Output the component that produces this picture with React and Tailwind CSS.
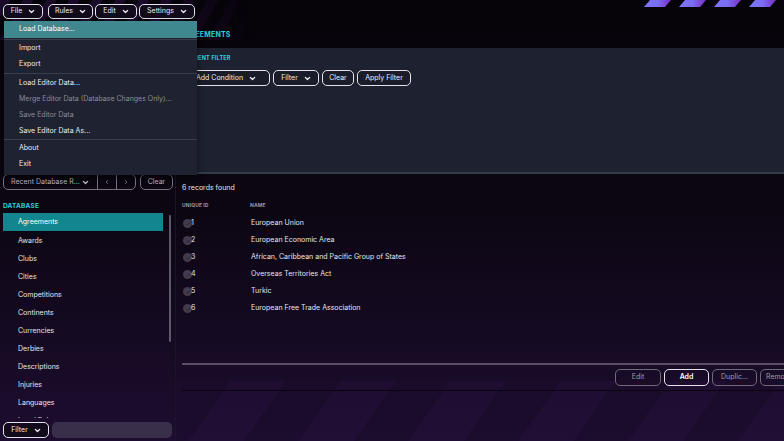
import React from "react";

const Chevron = ({ className = "" }) => (
  <svg viewBox="0 0 10 10" className={"w-[7px] h-[7px] " + className} fill="none" stroke="currentColor" strokeWidth="1.8" strokeLinecap="round" strokeLinejoin="round">
    <path d="M2 3.5 5 6.5 8 3.5" />
  </svg>
);

const Check = () => (
  <span className="w-[9px] h-[9px] rounded-full bg-[#433b4c] flex items-center justify-center">
    <svg viewBox="0 0 10 10" className="w-[6px] h-[6px]" fill="none" stroke="#2a2232" strokeWidth="1.6">
      <path d="M2 5.2 4.2 7.2 8 3" />
    </svg>
  </span>
);

function MenuButton({ label, w }) {
  return (
    <button className={`${w} h-[15px] flex items-center justify-center gap-[6px] rounded-[5px] border-[1.5px] border-[#e4e2ea] bg-[#120b1c] text-[7px] text-[#ecebf0]`}>
      {label}
      <Chevron />
    </button>
  );
}

const menuItems = [
  { t: "Load Database...", active: true },
  { sep: "h-[2px]" },
  { t: "Import" },
  { t: "Export" },
  { sep: "h-[3px]" },
  { t: "Load Editor Data..." },
  { t: "Merge Editor Data (Database Changes Only)...", dim: true },
  { t: "Save Editor Data", dim: true },
  { t: "Save Editor Data As..." },
  { sep: "h-[1px]" },
  { t: "About" },
  { t: "Exit" },
];

const tables = [
  "Agreements",
  "Awards",
  "Clubs",
  "Cities",
  "Competitions",
  "Continents",
  "Currencies",
  "Derbies",
  "Descriptions",
  "Injuries",
  "Languages",
  "Local Rules",
];

const records = [
  "European Union",
  "European Economic Area",
  "African, Caribbean and Pacific Group of States",
  "Overseas Territories Act",
  "Turkic",
  "European Free Trade Association",
];

function Outline({ children, className = "" }) {
  return (
    <button className={`h-[16px] flex items-center justify-center gap-[6px] rounded-[5px] border-[1.5px] border-[#e4e2ea] bg-[#1a1c29] text-[7px] text-[#ecebf0] ${className}`}>
      {children}
    </button>
  );
}

export default function App() {
  return (
    <div
      className="relative w-[784px] h-[441px] overflow-hidden text-[#e8e7ee] bg-[linear-gradient(180deg,#060309_0%,#0b0611_45%,#150a22_75%,#1d0d30_100%)]"
      style={{ fontFamily: "Inter, 'Noto Sans', sans-serif" }}
    >
      {/* decorative stripes */}
      <div className="absolute left-0 top-0 w-[250px] h-[40px] bg-[repeating-linear-gradient(120deg,#2a1142_0px,#2a1142_9px,#08040d_9px,#08040d_20px)] opacity-60 [mask-image:linear-gradient(90deg,#000_60%,transparent)]" />
      <div className="absolute left-[176px] bottom-0 w-[608px] h-[60px] bg-[repeating-linear-gradient(125deg,#1a0b2a_0px,#1a0b2a_45px,#27113f_45px,#27113f_90px)] opacity-40" />
      <svg className="absolute right-0 top-0" width="140" height="8" viewBox="0 0 140 8">
        <defs>
          <linearGradient id="tg" x1="0" x2="1">
            <stop offset="0" stopColor="#7b74f6" />
            <stop offset="0.5" stopColor="#7a6ef2" />
            <stop offset="1" stopColor="#7a2cc6" />
          </linearGradient>
        </defs>
        <g fill="url(#tg)">
          <polygon points="0,7 21,7 27,0 6,0" />
          <polygon points="35,7 56,7 62,0 41,0" />
          <polygon points="70,7 91,7 97,0 76,0" />
          <polygon points="105,7 126,7 132,0 111,0" />
        </g>
      </svg>

      <div className="relative flex flex-col h-full">
        {/* menubar */}
        <div className="h-[22px] flex items-start gap-[2px] pl-[3px] pt-[4px]">
          <MenuButton label="File" w="w-[40px]" />
          <span className="w-[1px]" />
          <MenuButton label="Rules" w="w-[45px]" />
          <MenuButton label="Edit" w="w-[42px]" />
          <MenuButton label="Settings" w="w-[56px]" />
        </div>

        <div className="flex flex-1 min-h-0">
          {/* left column */}
          <aside className="w-[176px] flex flex-col border-r border-[#1c1326]">
            <div className="h-[152px]" />
            <div className="flex items-center h-[16px] pl-[3px] gap-[3px]">
              <div className="flex h-[16px] rounded-[5px] border border-[#77727f] text-[#b9b6c0] text-[7px]">
                <span className="w-[94px] flex items-center justify-between pl-[7px] pr-[8px] border-r border-[#77727f]">
                  Recent Database R...
                  <Chevron />
                </span>
                <span className="w-[19px] flex items-center justify-center border-r border-[#77727f] text-[#77727f]">
                  <svg viewBox="0 0 10 10" className="w-[6px] h-[6px]" fill="none" stroke="currentColor" strokeWidth="1.5"><path d="M6.5 2 3.5 5 6.5 8" /></svg>
                </span>
                <span className="w-[18px] flex items-center justify-center text-[#77727f]">
                  <svg viewBox="0 0 10 10" className="w-[6px] h-[6px]" fill="none" stroke="currentColor" strokeWidth="1.5"><path d="M3.5 2 6.5 5 3.5 8" /></svg>
                </span>
              </div>
              <span className="ml-[1px] w-[33px] h-[16px] flex items-center justify-center rounded-[5px] border border-[#77727f] text-[#b9b6c0] text-[7px]">
                Clear
              </span>
            </div>
            <div className="mt-[12px] pl-[3px] text-[6.5px] font-bold tracking-[0.2px] text-[#2ad0dd]">DATABASE</div>
            <div className="relative flex-1 min-h-0 overflow-hidden mt-[1px] pl-[3px] pr-[12px]">
              {tables.map((t, i) => (
                <div
                  key={t}
                  className={`h-[18px] flex items-center pl-[15px] text-[7px] ${i === 0 ? "bg-[#13858e] text-white h-[17px] mb-[1px]" : "text-[#e6e5ec]"}`}
                >
                  {t}
                </div>
              ))}
              <div className="absolute right-[4px] top-[2px] w-[2px] h-[127px] rounded bg-[#5f5869]" />
            </div>
            <div className="h-[23px] flex items-start gap-[3px] pl-[3px] pt-[4px]">
              <button className="w-[46px] h-[16px] flex items-center justify-center gap-[6px] rounded-[5px] border-[1.5px] border-[#e4e2ea] bg-[#120b1c] text-[7px]">
                Filter
                <Chevron />
              </button>
              <div className="w-[120px] h-[16px] rounded-[5px] bg-[#3a2f4b]" />
            </div>
          </aside>

          {/* right column */}
          <main className="flex-1 flex flex-col min-w-0">
            <div className="h-[26px] flex items-end pb-[8px] pl-[4px] text-[7px] font-bold tracking-[0.2px] text-[#2ad0dd]">
              AGREEMENTS
            </div>
            <section className="h-[126px] ml-[2px] bg-[#1e2130] border-b-[2px] border-[#363948] pl-[4px]">
              <div className="pt-[6px] text-[5.5px] font-bold tracking-[0.2px] text-[#2ad0dd]">CURRENT FILTER</div>
              <div className="mt-[8px] flex gap-[3px]">
                <Outline className="w-[88px]">
                  Add Condition
                  <Chevron />
                </Outline>
                <Outline className="w-[46px]">
                  Filter
                  <Chevron />
                </Outline>
                <Outline className="w-[32px]">Clear</Outline>
                <Outline className="w-[54px]">Apply Filter</Outline>
              </div>
            </section>

            <div className="flex-1 flex flex-col pl-[6px]">
              <div className="mt-[9px] text-[7px] text-[#e6e5ec]">6 records found</div>
              <div className="mt-[8px] flex text-[5px] font-bold text-[#9a97a3] tracking-[0.1px]">
                <span className="w-[68px]">UNIQUE ID</span>
                <span>NAME</span>
              </div>
              <div className="mt-[6px]">
                {records.map((r, i) => (
                  <div key={r} className="h-[17px] flex items-center text-[7px] text-[#e6e5ec]">
                    <span className="w-[69px] flex items-center pl-[1px]">
                      <Check />
                      <span className="-ml-[1px]">{i + 1}</span>
                    </span>
                    <span>{r}</span>
                  </div>
                ))}
              </div>
              <div className="flex-1" />
              <div className="h-[2px] bg-[#5a4e68]" />
              <div className="h-[26px] flex items-start justify-end gap-[3px] pt-[4px] border-b border-[#0a0410] -mr-[30px]">
                <span className="w-[46px] h-[17px] flex items-center justify-center rounded-[5px] border-[1.5px] border-[#6f6a7a] text-[#9f9ba8] text-[7px]">Edit</span>
                <span className="w-[45px] h-[17px] flex items-center justify-center rounded-[5px] border-[1.5px] border-[#e4e2ea] text-white text-[7px] font-semibold">Add</span>
                <span className="w-[45px] h-[17px] flex items-center justify-center rounded-[5px] border-[1.5px] border-[#6f6a7a] text-[#9f9ba8] text-[7px]">Duplic...</span>
                <span className="w-[54px] h-[17px] flex items-center pl-[5px] rounded-[5px] border-[1.5px] border-[#6f6a7a] text-[#9f9ba8] text-[7px]">Remove</span>
              </div>
              <div className="h-[50px]" />
            </div>
          </main>
        </div>
      </div>

      {/* open File menu */}
      <div className="absolute left-[4px] top-[21px] w-[193px] pb-[3px] bg-[#1f2230] shadow-[0_2px_6px_rgba(0,0,0,0.6)]">
        {menuItems.map((m, i) =>
          m.sep ? (
            <div key={i} className={`${m.sep} flex items-center`}>
              <div className="h-[1px] w-full bg-[#3b3e4d]" />
            </div>
          ) : (
            <div
              key={i}
              className={`${i === 0 ? "h-[17px]" : "h-[16px]"} flex items-center pl-[15px] text-[7px] ${m.active ? "bg-[#3f8890] text-white" : m.dim ? "text-[#8b8d98]" : "text-[#ecebf0]"}`}
            >
              {m.t}
            </div>
          )
        )}
      </div>
    </div>
  );
}
